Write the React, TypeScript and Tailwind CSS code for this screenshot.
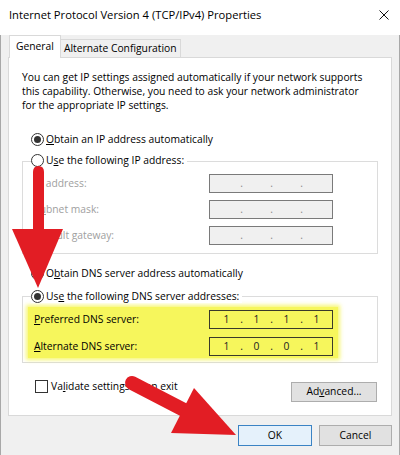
import React from "react";

// IPv4 properties dialog, Windows 10 style

const Radio: React.FC<{ checked?: boolean }> = ({ checked }) => (
  <span className="w-[13px] h-[13px] rounded-full border border-[#333] bg-white flex items-center justify-center shrink-0">
    {checked && <span className="w-[7px] h-[7px] rounded-full bg-[#333]" />}
  </span>
);

const RadioRow: React.FC<{ checked?: boolean; children: React.ReactNode; className?: string }> = ({
  checked,
  children,
  className = "",
}) => (
  <div className={`relative z-10 flex items-center h-[14px] gap-[2px] ml-[9px] w-fit pr-[3px] bg-white ${className}`}>
    <Radio checked={checked} />
    <span className="leading-[14px] whitespace-nowrap">{children}</span>
  </div>
);

const IpField: React.FC<{ values?: string[]; disabled?: boolean }> = ({ values = ["", "", "", ""], disabled }) => (
  <div
    className={`w-[124px] h-[19px] border flex items-center pl-[3px] ${
      disabled ? "border-[#7a7a7a] bg-[#f0f0f0] text-[#8a8a8a]" : "border-[#3a3a2a] text-[#222]"
    }`}
  >
    {values.map((v, i) => (
      <React.Fragment key={i}>
        <span className="w-[27px] text-center leading-[17px]">{v}</span>
        {i < 3 && <span className="w-[3px] text-center leading-[17px]">.</span>}
      </React.Fragment>
    ))}
  </div>
);

const FieldRow: React.FC<{ label: React.ReactNode; disabled?: boolean; values?: string[] }> = ({
  label,
  disabled,
  values,
}) => (
  <div className="flex items-center h-[19px]">
    <span className={`w-[175px] whitespace-nowrap ${disabled ? "text-[#a0a0a0]" : ""}`}>{label}</span>
    <IpField disabled={disabled} values={values} />
  </div>
);

const Button: React.FC<{ children: React.ReactNode; className?: string; primary?: boolean }> = ({
  children,
  className = "",
  primary,
}) => (
  <div
    className={`flex items-center justify-center border ${
      primary ? "border-[#3b83c4] bg-[#e5f1fb]" : "border-[#adadad] bg-[#e1e1e1]"
    } ${className}`}
  >
    {children}
  </div>
);

export default function App() {
  return (
    <div className="relative w-[400px] h-[455px] overflow-hidden bg-white text-black text-[10.3px] font-['Open_Sans',sans-serif]">
      {/* Title bar */}
      <div className="h-[30px] flex items-center justify-between pl-[9px] pr-[11px]">
        <span className="text-[11.2px] whitespace-nowrap">Internet Protocol Version 4 (TCP/IPv4) Properties</span>
        <svg width="10" height="10" viewBox="0 0 10 10">
          <path d="M0.5 0.5 L9.5 9.5 M9.5 0.5 L0.5 9.5" stroke="#111" strokeWidth="1" />
        </svg>
      </div>

      {/* Client area */}
      <div className="h-[423px] bg-[#f0f0f0] border-x border-b border-[#a8a8a8] px-[7px]">
        {/* Tabs */}
        <div className="mt-[5px] h-[22px] flex items-end pl-[1px]">
          <div className="relative z-10 -mb-px h-[23px] w-[52px] bg-white border-x border-t border-[#d9d9d9] flex items-center pl-[6px]">
            General
          </div>
          <div className="h-[18px] w-[120px] bg-[#f0f0f0] border-t border-r border-[#d9d9d9] flex items-center pl-[3px]">
            Alternate Configuration
          </div>
        </div>

        {/* Tab panel */}
        <div className="h-[359px] bg-white border border-[#d9d9d9] px-[13px] pt-[12px]">
          <p className="leading-[14px]">
            You can get IP settings assigned automatically if your network supports
            <br />
            this capability. Otherwise, you need to ask your network administrator
            <br />
            for the appropriate IP settings.
          </p>

          <RadioRow checked className="mt-[20px]">
            <u>O</u>btain an IP address automatically
          </RadioRow>
          <RadioRow className="mt-[7px]">
            U<u>s</u>e the following IP address:
          </RadioRow>
          <div className="-mt-[6px] border border-[#dcdcdc] pl-[11px] pt-[12px] pb-[8px] flex flex-col gap-[7px]">
            <FieldRow disabled label={<><u>I</u>P address:</>} />
            <FieldRow disabled label={<>S<u>u</u>bnet mask:</>} />
            <FieldRow disabled label={<>D<u>e</u>fault gateway:</>} />
          </div>

          <RadioRow className="mt-[12px]">
            O<u>b</u>tain DNS server address automatically
          </RadioRow>
          <RadioRow checked className="mt-[9px]">
            Us<u>e</u> the following DNS server addresses:
          </RadioRow>
          <div className="-mt-[7px] border border-[#dcdcdc] pt-[10px] pb-[4px]">
            <div className="ml-[5px] w-[310px] bg-[#f6f65c] shadow-[0_0_4px_2px_rgba(246,246,92,0.85)] pl-[6px] pt-[3px] pb-[2px] flex flex-col gap-[8px]">
              <FieldRow label={<><u>P</u>referred DNS server:</>} values={["1", "1", "1", "1"]} />
              <FieldRow label={<><u>A</u>lternate DNS server:</>} values={["1", "0", "0", "1"]} />
            </div>
          </div>

          <div className="mt-[17px] flex items-start justify-between pl-[13px] pr-[1px]">
            <div className="flex items-center h-[13px] gap-[3px]">
              <span className="w-[13px] h-[13px] border border-[#333] bg-white shrink-0" />
              <span className="whitespace-nowrap">
                Va<u>l</u>idate settings upon exit
              </span>
            </div>
            <Button className="mt-[2px] w-[86px] h-[20px]">
              Ad<u>v</u>anced...
            </Button>
          </div>
        </div>

        {/* Dialog buttons */}
        <div className="mt-[9px] flex justify-end gap-[7px]">
          <Button primary className="w-[74px] h-[21px]">
            OK
          </Button>
          <Button className="w-[73px] h-[21px]">Cancel</Button>
        </div>
      </div>

      {/* Red annotation arrows */}
      <svg className="absolute inset-0 z-20 pointer-events-none" width="400" height="455" viewBox="0 0 400 455">
        <g fill="#e21d24">
          <path d="M33 172 Q33 166 38.5 166 Q44 166 44 172 L44 230 L33 230 Z" />
          <polygon points="12,229 63,229 38,288" />
          <line x1="132" y1="383" x2="186" y2="411" stroke="#e21d24" strokeWidth="14" strokeLinecap="round" />
          <polygon points="194,388 171,433 236,435" />
        </g>
      </svg>
    </div>
  );
}
